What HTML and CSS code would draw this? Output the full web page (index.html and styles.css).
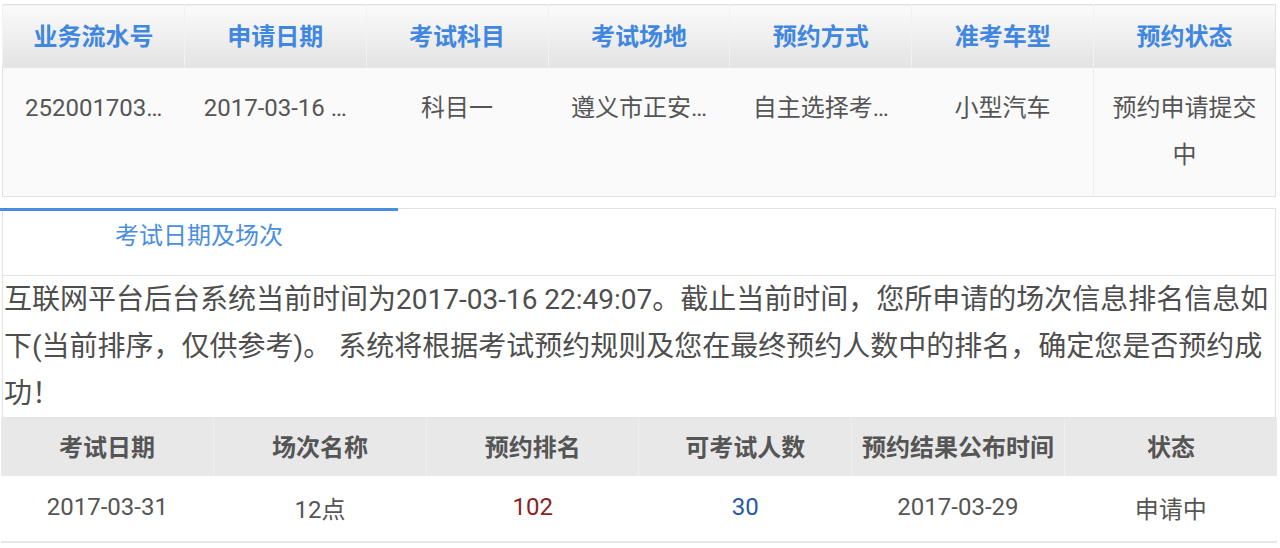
FILE: index.html
```html
<!DOCTYPE html>
<html lang="zh-CN">
<head>
    <meta charset="UTF-8">
    <meta name="viewport" content="width=device-width, initial-scale=1.0">
    <title>预约信息</title>
    <link rel="stylesheet" href="styles.css">
</head>
<body>
    <div class="page">
        <table class="apply-table">
            <thead>
                <tr>
                    <th>业务流水号</th>
                    <th>申请日期</th>
                    <th>考试科目</th>
                    <th>考试场地</th>
                    <th>预约方式</th>
                    <th>准考车型</th>
                    <th>预约状态</th>
                </tr>
            </thead>
            <tbody>
                <tr>
                    <td class="cut">252001703…</td>
                    <td class="cut">2017-03-16 …</td>
                    <td class="cut">科目一</td>
                    <td class="cut">遵义市正安…</td>
                    <td class="cut">自主选择考…</td>
                    <td class="cut">小型汽车</td>
                    <td class="status">预约申请提交中</td>
                </tr>
            </tbody>
        </table>

        <div class="tabs">
            <div class="tab active">考试日期及场次</div>
        </div>

        <p class="notice">互联网平台后台系统当前时间为2017-03-16 22:49:07。截止当前时间，您所申请的场次信息排名信息如下(当前排序，仅供参考)。 系统将根据考试预约规则及您在最终预约人数中的排名，确定您是否预约成功！</p>

        <table class="session-table">
            <thead>
                <tr>
                    <th>考试日期</th>
                    <th>场次名称</th>
                    <th>预约排名</th>
                    <th>可考试人数</th>
                    <th>预约结果公布时间</th>
                    <th>状态</th>
                </tr>
            </thead>
            <tbody>
                <tr>
                    <td>2017-03-31</td>
                    <td>12点</td>
                    <td class="rank">102</td>
                    <td class="seats">30</td>
                    <td>2017-03-29</td>
                    <td>申请中</td>
                </tr>
            </tbody>
        </table>
    </div>
</body>
</html>
```

FILE: styles.css
```css
html, body{
    margin: 0;
    padding: 0;
    background-color: #fff;
}
body{
    font-family: Roboto, "Noto Sans CJK SC", sans-serif;
    color: #555;
}
.page{
    width: 1276px;
    padding-top: 4px;
}

/* top table */
.apply-table{
    width: 1274px;
    margin-left: 2px;
    table-layout: fixed;
    border-collapse: collapse;
    border: 1px solid #e2e2e2;
}
.apply-table th{
    height: 58px;
    padding: 0 0 4px 0;
    font-size: 24px;
    font-weight: bold;
    color: #3f87e0;
    background: linear-gradient(#fbfbfb, #e3e3e3);
    border-left: 1px solid #f2f2f2;
    border-bottom: 1px solid #e6e6e6;
}
.apply-table td{
    padding: 17px 6px;
    font-size: 24px;
    line-height: 47px;
    text-align: center;
    vertical-align: top;
    background-color: #fafafa;
}
.apply-table td.cut{
    white-space: nowrap;
    overflow: hidden;
}
.apply-table td.status{
    padding: 17px 16px;
    border-left: 1px solid #eeeeee;
}

/* tabs */
.tabs{
    margin-top: 11px;
    margin-left: 2px;
    border-top: 1px solid #e2e2e2;
    border-left: 1px solid #e2e2e2;
    border-right: 1px solid #e2e2e2;
    display: flex;
}
.tab{
    width: 398px;
    margin-top: -1px;
    margin-left: -3px;
    padding-top: 2px;
    padding-bottom: 15px;
    font-size: 24px;
    line-height: 47px;
    text-align: center;
    color: #4a8ee3;
}
.tab.active{
    border-top: 3px solid #4a8be3;
}

/* notice text */
.notice{
    margin: 0 0 0 2px;
    padding: 0 0 0 1px;
    border: 1px solid #e2e2e2;
    font-size: 28px;
    line-height: 47px;
    color: #4e4e4e;
}

/* bottom table */
.session-table{
    width: 1276px;
    margin-left: 1px;
    table-layout: fixed;
    border-collapse: collapse;
    border-bottom: 2px solid #e6e6e6;
}
.session-table th{
    height: 54px;
    padding: 0 0 4px 0;
    font-size: 24px;
    font-weight: bold;
    color: #555;
    background-color: #e8e8e8;
    border-left: 1px solid #efefef;
}
.session-table th:first-child{
    border-left: none;
}
.session-table td{
    height: 62px;
    padding: 0 0 3px 0;
    font-size: 24px;
    text-align: center;
    background-color: #fff;
}
.session-table td.rank{
    color: #8c1f1f;
}
.session-table td.seats{
    color: #2658a8;
}
```
